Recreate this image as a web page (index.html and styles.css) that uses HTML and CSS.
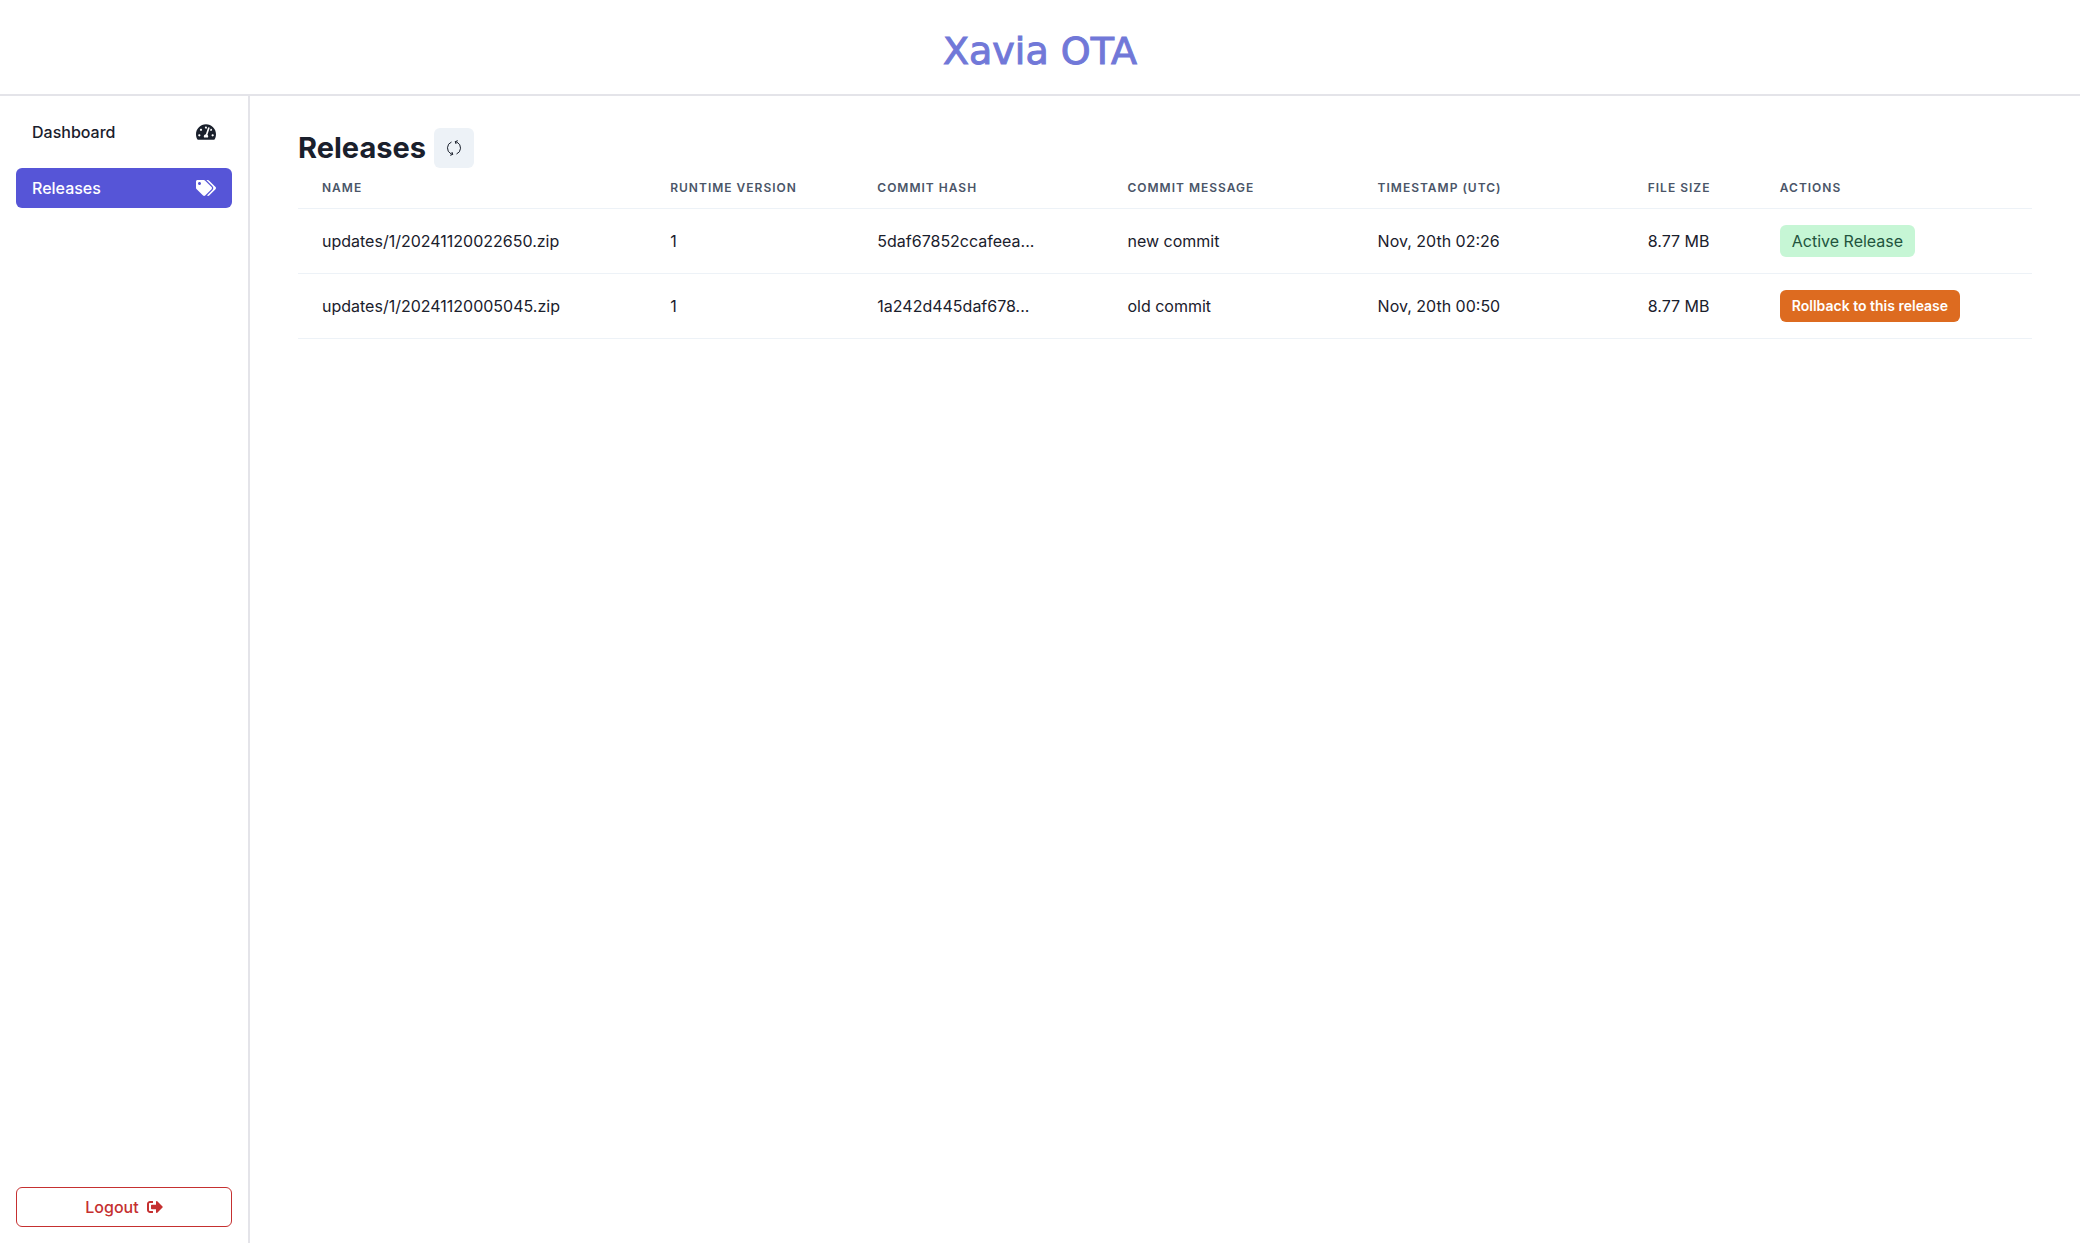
FILE: index.html
```html
<!DOCTYPE html>
<html lang="en">
<head>
<meta charset="utf-8">
<meta name="viewport" content="width=device-width, initial-scale=1">
<title>Xavia OTA</title>
<link rel="stylesheet" href="styles.css">
</head>
<body>
<header class="header"><span class="logo">Xavia OTA</span></header>
<div class="shell">
  <aside class="sidebar">
    <nav class="nav">
      <a class="nav-link" href="#dashboard">Dashboard
        <svg class="nav-icon" viewBox="0 0 576 512" aria-hidden="true"><path d="M288 32C128.94 32 0 160.94 0 320c0 52.8 14.25 102.26 39.06 144.8 5.61 9.62 16.3 15.2 27.44 15.2h443c11.14 0 21.83-5.58 27.44-15.2C561.75 422.26 576 372.8 576 320c0-159.06-128.94-288-288-288zm0 64c14.71 0 26.58 10.13 30.32 23.65-1.11 2.26-2.64 4.23-3.45 6.67l-9.22 27.67c-5.13 3.49-10.97 6.01-17.64 6.01-17.67 0-32-14.33-32-32S270.33 96 288 96zM96 384c-17.67 0-32-14.33-32-32s14.33-32 32-32 32 14.33 32 32-14.33 32-32 32zm48-160c-17.67 0-32-14.33-32-32s14.33-32 32-32 32 14.33 32 32-14.33 32-32 32zm246.77-72.41l-61.33 184C343.13 347.33 352 364.54 352 384c0 11.72-3.38 22.55-8.88 32H232.88c-5.5-9.45-8.88-20.28-8.88-32 0-33.94 26.5-61.43 59.9-63.59l61.34-184.01c4.17-12.56 17.73-19.45 30.36-15.17 12.57 4.19 19.35 17.79 15.17 30.36zm14.66 57.2l15.52-46.55c3.47-1.29 7.13-2.23 11.05-2.23 17.67 0 32 14.33 32 32s-14.33 32-32 32c-11.38-.01-20.89-6.28-26.57-15.22zM480 384c-17.67 0-32-14.33-32-32s14.33-32 32-32 32 14.33 32 32-14.33 32-32 32z"/></svg>
      </a>
      <a class="nav-link nav-link-active" href="#releases" aria-current="page">Releases
        <svg class="nav-icon" viewBox="0 0 640 512" aria-hidden="true"><path d="M497.941 225.941L286.059 14.059A48 48 0 0 0 252.118 0H48C21.49 0 0 21.49 0 48v204.118a48 48 0 0 0 14.059 33.941l211.882 211.882c18.744 18.745 49.136 18.746 67.882 0l204.118-204.118c18.745-18.745 18.745-49.137 0-67.882zM112 160c-26.51 0-48-21.49-48-48s21.49-48 48-48 48 21.49 48 48-21.49 48-48 48zm513.941 133.823L421.823 497.941c-18.745 18.745-49.137 18.745-67.882 0l-.36-.36L527.64 323.522c16.999-16.999 26.36-39.6 26.36-63.64s-9.362-46.641-26.36-63.64L331.397 0h48.721a48 48 0 0 1 33.941 14.059l211.882 211.882c18.745 18.745 18.745 49.137 0 67.882z"/></svg>
      </a>
    </nav>
    <button class="logout" type="button">Logout
      <svg class="logout-icon" viewBox="0 0 512 512" aria-hidden="true"><path d="M497 273L329 441c-15 15-41 4.5-41-17v-96H152c-13.3 0-24-10.7-24-24v-96c0-13.3 10.7-24 24-24h136V88c0-21.4 25.9-32 41-17l168 168c9.3 9.4 9.3 24.6 0 34zM192 436v-40c0-6.6-5.4-12-12-12H96c-17.7 0-32-14.3-32-32V160c0-17.7 14.3-32 32-32h84c6.6 0 12-5.4 12-12V76c0-6.6-5.4-12-12-12H96c-53 0-96 43-96 96v192c0 53 43 96 96 96h84c6.6 0 12-5.4 12-12z"/></svg>
    </button>
  </aside>
  <main class="content">
    <div class="title-row">
      <h1 class="title">Releases</h1>
      <button class="refresh" type="button" aria-label="Refresh">
        <svg class="refresh-icon" viewBox="0 0 16 16" aria-hidden="true"><path d="M5.5 2A6.5 6.5 0 0 0 5 13.800L6.500 14.300M4.200 15.300L6.800 14.400L5.900 12M10.500 14A6.500 6.500 0 0 0 11 2.200L9.500 1.700M11.800 .700L9.200 1.600L10.100 4"/></svg>
      </button>
    </div>
    <table class="releases">
      <colgroup>
        <col class="col-name"><col class="col-runtime"><col class="col-commit"><col class="col-commit"><col class="col-time"><col class="col-size"><col class="col-actions">
      </colgroup>
      <thead>
        <tr><th scope="col">Name</th><th scope="col">Runtime Version</th><th scope="col">Commit Hash</th><th scope="col">Commit Message</th><th scope="col">Timestamp (UTC)</th><th scope="col">File Size</th><th scope="col">Actions</th></tr>
      </thead>
      <tbody>
        <tr><td>updates/1/20241120022650.zip</td><td>1</td><td>5daf67852ccafeea...</td><td>new commit</td><td>Nov, 20th 02:26</td><td>8.77 MB</td><td><span class="badge">Active Release</span></td></tr>
        <tr><td>updates/1/20241120005045.zip</td><td>1</td><td>1a242d445daf678...</td><td>old commit</td><td>Nov, 20th 00:50</td><td>8.77 MB</td><td><button class="rollback" type="button">Rollback to this release</button></td></tr>
      </tbody>
    </table>
  </main>
</div>
</body>
</html>
```
FILE: styles.css
```css
* { box-sizing: border-box; }

body {
  margin: 0;
  min-height: 100vh;
  display: flex;
  flex-direction: column;
  background: #fff;
  color: #1a202c;
  font-family: Inter, "Liberation Sans", sans-serif;
  font-size: 16px;
  line-height: 24px;
}

button { font-family: inherit; cursor: pointer; }

.header {
  display: flex;
  justify-content: center;
  padding: 28px 24px 20px;
  border-bottom: 2px solid #e4e4e9;
}

.logo {
  color: #7178d8;
  font-family: "DejaVu Sans", sans-serif;
  font-size: 38px;
  line-height: 46px;
  -webkit-text-stroke: 1px #7178d8;
}

.shell { flex: 1; display: flex; }

.sidebar {
  flex: none;
  width: 250px;
  padding: 16px;
  display: flex;
  flex-direction: column;
  justify-content: space-between;
  border-right: 2px solid #e4e4e9;
}

.nav { display: flex; flex-direction: column; gap: 16px; }

.nav-link {
  display: flex;
  align-items: center;
  justify-content: space-between;
  height: 40px;
  padding: 0 16px;
  border-radius: 6px;
  color: inherit;
  font-weight: 500;
  text-decoration: none;
}

.nav-link-active { background: #5655d7; color: #fff; }

.nav-icon { width: 20px; height: 20px; fill: currentColor; }

.logout {
  display: flex;
  align-items: center;
  justify-content: center;
  gap: 8px;
  height: 40px;
  border: 1px solid #c53030;
  border-radius: 6px;
  background: none;
  color: #c53030;
  font-size: 16px;
  font-weight: 500;
}

.logout-icon { width: 16px; height: 16px; fill: currentColor; }

.content { flex: 1; min-width: 0; padding: 32px 48px; }

.title-row { display: flex; align-items: center; gap: 8px; }

.title { margin: 0; font-size: 29px; line-height: 36px; font-weight: 700; }

.refresh {
  display: flex;
  align-items: center;
  justify-content: center;
  width: 40px;
  height: 40px;
  padding: 0;
  border: 0;
  border-radius: 6px;
  background: #edf2f7;
  color: #1a202c;
}

.refresh-icon { width: 16px; height: 16px; fill: none; stroke: currentColor; }

.releases { width: 100%; table-layout: fixed; border-collapse: separate; border-spacing: 0; }

.col-name { width: 348px; }
.col-runtime { width: 207px; }
.col-commit { width: 250px; }
.col-time { width: 270px; }
.col-size { width: 132px; }
.col-actions { width: 276px; }

.releases th,
.releases td {
  padding: 0 24px;
  border-bottom: 1px solid #edf2f7;
  text-align: left;
  white-space: nowrap;
}

.releases th {
  height: 41px;
  color: #4a5568;
  font-size: 12px;
  line-height: 16px;
  font-weight: 600;
  letter-spacing: 1px;
  text-transform: uppercase;
}

.releases td { height: 65px; }

.badge,
.rollback {
  display: inline-block;
  height: 32px;
  padding: 0 12px;
  border: 0;
  border-radius: 6px;
  line-height: 32px;
  vertical-align: middle;
}

.badge { background: #c6f6d5; color: #22543d; }

.rollback {
  background: #dd6b20;
  color: #fff;
  font-size: 14px;
  font-weight: 600;
}
```
